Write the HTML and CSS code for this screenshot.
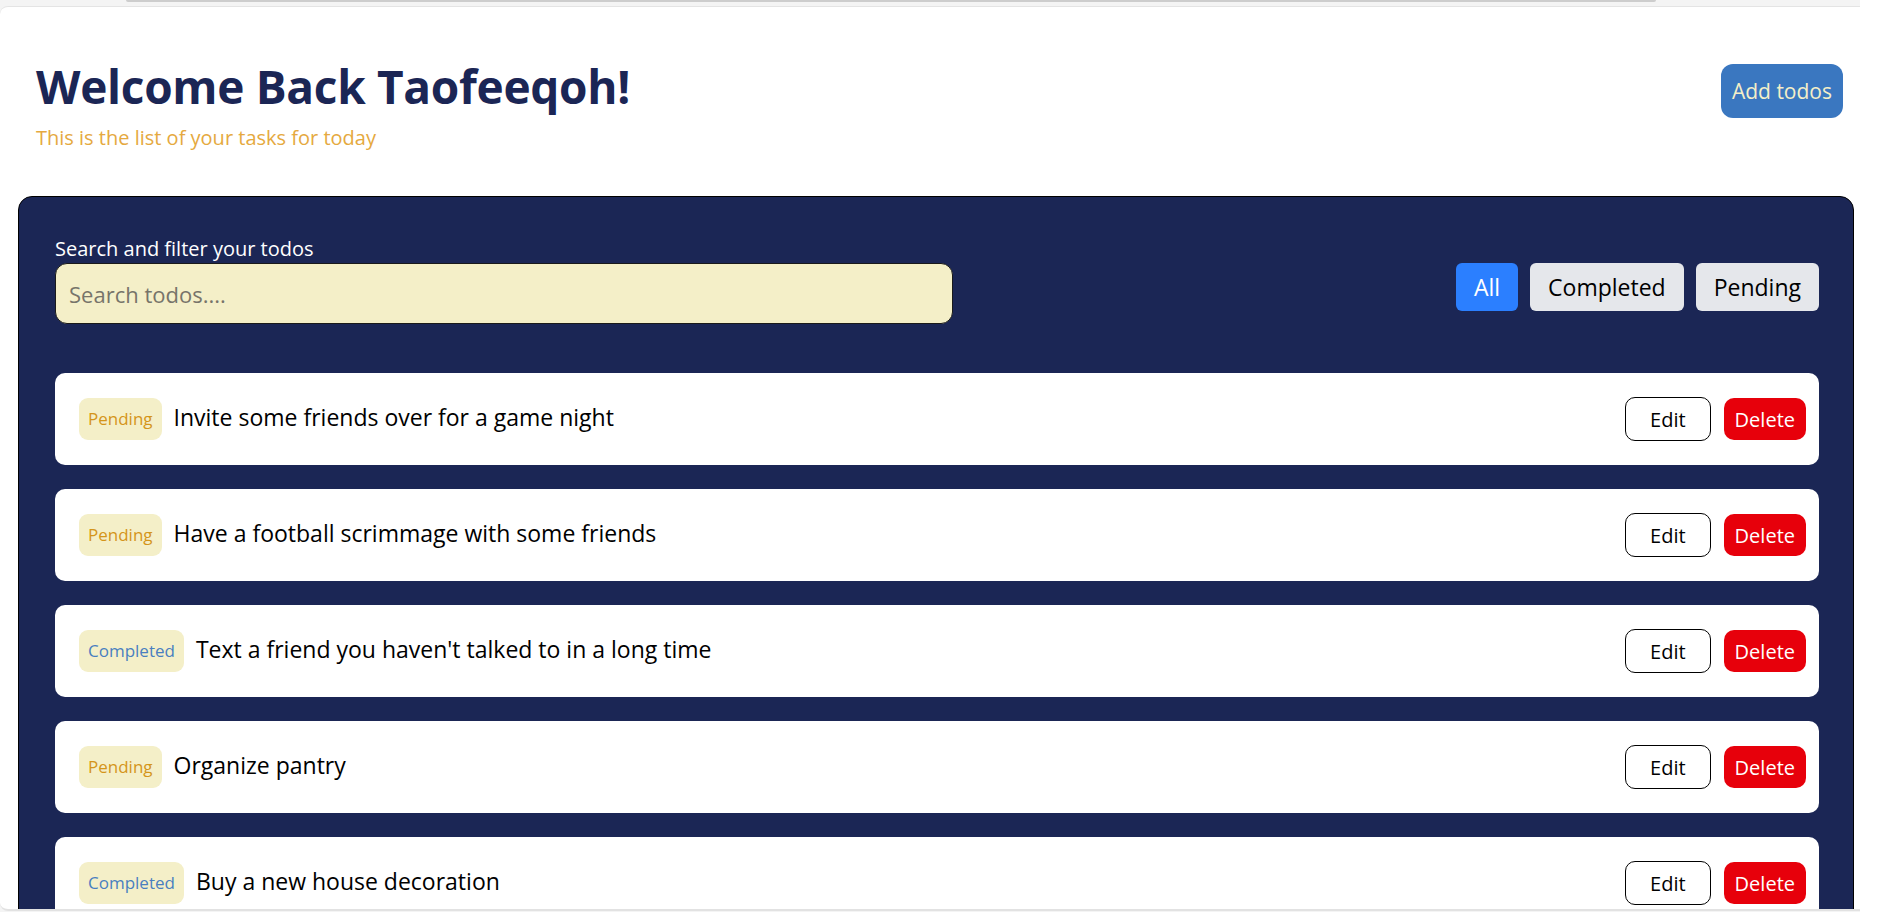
FILE: index.html
```html
<!DOCTYPE html>
<html lang="en">
<head>
<meta charset="utf-8">
<title>Todos</title>
<link rel="stylesheet" href="styles.css">
</head>
<body>
<div class="frame">
  <div class="topbar"><div class="thumb"></div></div>
  <div class="viewport">
    <header class="header">
      <div class="intro">
        <h1 class="title">Welcome Back Taofeeqoh!</h1>
        <p class="subtitle">This is the list of your tasks for today</p>
      </div>
      <button class="add-btn">Add todos</button>
    </header>
    <main class="panel">
      <div class="toolbar">
        <div class="search">
          <label class="search-label" for="q">Search and filter your todos</label>
          <input id="q" class="search-input" type="text" placeholder="Search todos....">
        </div>
        <div class="filters">
          <button class="filter filter-active">All</button>
          <button class="filter">Completed</button>
          <button class="filter">Pending</button>
        </div>
      </div>
      <ul class="list">
        <li class="card">
          <div class="card-main"><span class="badge badge-pending">Pending</span><span class="task">Invite some friends over for a game night</span></div>
          <div class="actions"><button class="btn-edit">Edit</button><button class="btn-delete">Delete</button></div>
        </li>
        <li class="card">
          <div class="card-main"><span class="badge badge-pending">Pending</span><span class="task">Have a football scrimmage with some friends</span></div>
          <div class="actions"><button class="btn-edit">Edit</button><button class="btn-delete">Delete</button></div>
        </li>
        <li class="card">
          <div class="card-main"><span class="badge badge-completed">Completed</span><span class="task">Text a friend you haven't talked to in a long time</span></div>
          <div class="actions"><button class="btn-edit">Edit</button><button class="btn-delete">Delete</button></div>
        </li>
        <li class="card">
          <div class="card-main"><span class="badge badge-pending">Pending</span><span class="task">Organize pantry</span></div>
          <div class="actions"><button class="btn-edit">Edit</button><button class="btn-delete">Delete</button></div>
        </li>
        <li class="card">
          <div class="card-main"><span class="badge badge-completed">Completed</span><span class="task">Buy a new house decoration</span></div>
          <div class="actions"><button class="btn-edit">Edit</button><button class="btn-delete">Delete</button></div>
        </li>
      </ul>
    </main>
  </div>
</div>
</body>
</html>
```
FILE: styles.css
```css
* { box-sizing: border-box; }

html, body {
  margin: 0;
  padding: 0;
  background: #ffffff;
}

body {
  font-family: "Open Sans", "Noto Sans", sans-serif;
  color: #000;
  overflow: hidden;
}

.frame {
  width: 1860px;
  height: 912px;
  background: #f4f4f4;
  display: flex;
  flex-direction: column;
  overflow: hidden;
}

.topbar {
  height: 6px;
  flex: 0 0 6px;
  display: flex;
}

.thumb {
  margin-left: 126px;
  width: 1530px;
  height: 2px;
  background: #cdcdcd;
  border-radius: 0 0 2px 2px;
}

.viewport {
  height: 905px;
  flex: 0 0 905px;
  background: #ffffff;
  border-top: 1px solid #e4e4e4;
  border-bottom: 2px solid #e2e2e2;
  border-radius: 8px 0 0 8px;
  overflow: hidden;
  padding: 0 6px 0 18px;
}

.header {
  display: flex;
  justify-content: space-between;
  align-items: flex-start;
  padding: 52px 11px 0 18px;
  height: 189px;
}

.title {
  margin: 0;
  font-size: 46px;
  line-height: 1.2;
  font-weight: 700;
  color: #1b2655;
  letter-spacing: -0.3px;
}

.subtitle {
  margin: 10px 0 0;
  font-size: 20px;
  line-height: 28px;
  color: #e5a940;
}

.add-btn {
  margin-top: 5px;
  height: 54px;
  padding: 0 11px;
  border: none;
  border-radius: 12px;
  background: #3a77c0;
  color: #f4efc8;
  font-family: inherit;
  font-size: 21px;
}

.panel {
  background: #1b2655;
  border: 1px solid #000;
  border-radius: 14px;
  padding: 38px 34px 36px 36px;
  min-height: 800px;
}

.toolbar {
  display: flex;
  justify-content: space-between;
  align-items: flex-start;
}

.search {
  display: flex;
  flex-direction: column;
}

.search-label {
  color: #ffffff;
  font-size: 20px;
  line-height: 28px;
}

.search-input {
  width: 898px;
  height: 61px;
  border: 1px solid #1a1a1a;
  border-radius: 12px;
  background: #f4efc8;
  padding: 0 13px;
  font-family: inherit;
  font-size: 22px;
  color: #333;
  outline: none;
}

.search-input::placeholder {
  color: #77746a;
}

.filters {
  margin-top: 28px;
  display: flex;
  gap: 12px;
}

.filter {
  height: 48px;
  padding: 0 18px;
  border: none;
  border-radius: 6px;
  background: #e5e7eb;
  color: #000;
  font-family: inherit;
  font-size: 23px;
}

.filter-active {
  background: #2b7fff;
  color: #fff;
}

.list {
  list-style: none;
  margin: 49px 0 0;
  padding: 0;
  display: flex;
  flex-direction: column;
  gap: 24px;
}

.card {
  height: 92px;
  background: #fff;
  border-radius: 10px;
  padding: 0 13px 0 24px;
  display: flex;
  align-items: center;
  justify-content: space-between;
}

.card-main {
  display: flex;
  align-items: center;
  gap: 12px;
}

.badge {
  height: 42px;
  line-height: 42px;
  padding: 0 9px;
  border-radius: 9px;
  background: #f4efc8;
  font-size: 17px;
}

.badge-pending { color: #d4951a; }
.badge-completed { color: #4a7fc0; }

.task {
  font-size: 23px;
  line-height: 30px;
  margin-top: -4px;
  color: #000;
}

.actions {
  display: flex;
  align-items: center;
  gap: 13px;
}

.btn-edit,
.btn-delete {
  font-family: inherit;
  font-size: 20px;
  border-radius: 10px;
}

.btn-edit {
  height: 44px;
  padding: 0 24px;
  background: #fff;
  border: 1px solid #000;
  color: #000;
}

.btn-delete {
  height: 42px;
  padding: 0 11px;
  background: #e7000b;
  border: none;
  color: #fff;
}
```
